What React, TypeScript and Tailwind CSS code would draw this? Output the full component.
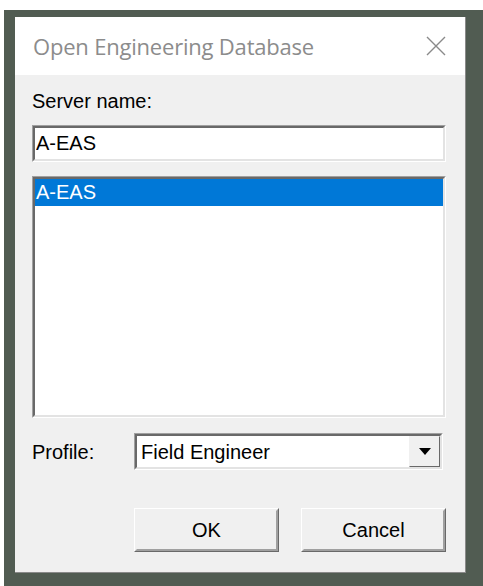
import React, { useState } from "react";

const ui = { fontFamily: '"Liberation Sans", Arial, sans-serif' };
const title = { fontFamily: '"Open Sans", "Noto Sans", sans-serif' };

// Classic sunken 3D frame used by edits, lists and combos
const Sunken = ({ className = "", children }: { className?: string; children: React.ReactNode }) => (
  <div className={`border border-t-[#a0a0a0] border-l-[#a0a0a0] border-b-white border-r-white ${className}`}>
    <div className="h-full border-2 border-t-[#696969] border-l-[#696969] border-b-[#e3e3e3] border-r-[#e3e3e3] bg-white">
      {children}
    </div>
  </div>
);

const Button = ({ label }: { label: string }) => (
  <button className="w-[145px] h-[44px] border border-t-white border-l-white border-b-[#696969] border-r-[#696969] bg-[#f0f0f0]">
    <span className="flex h-full items-center justify-center border-2 border-t-[#f0f0f0] border-l-[#f0f0f0] border-b-[#a0a0a0] border-r-[#a0a0a0] text-[20px] text-black">
      {label}
    </span>
  </button>
);

export default function App() {
  const [server, setServer] = useState("A-EAS");
  const servers = ["A-EAS"];

  return (
    <div className="w-[483px] h-[586px] bg-white pl-[4px] pt-[10px] overflow-hidden" style={ui}>
      <div className="h-full bg-[#515c52] pl-[11px] pt-[7px] pr-[17px] pb-[13px]">
        <div className="h-full flex flex-col bg-[#f0f0f0] border-r border-b border-[#8a8a8a]">
          {/* caption */}
          <div className="h-[58px] shrink-0 bg-white flex items-center justify-between pl-[18px] pr-[18px]">
            <span className="text-[22px] text-[#8c8c8c] tracking-[-0.2px]" style={title}>
              Open Engineering Database
            </span>
            <svg width="20" height="20" viewBox="0 0 20 20" className="mr-[1px]">
              <path d="M1 1 L19 19 M19 1 L1 19" stroke="#8a8a8a" strokeWidth="1.4" fill="none" />
            </svg>
          </div>

          {/* body */}
          <div className="flex-1 flex flex-col pl-[17px] pr-[19px] pt-[14px]">
            <div className="text-[20px] leading-[24px] text-black">Server name:</div>

            <Sunken className="mt-[12px] h-[37px]">
              <input
                value={server}
                onChange={(e) => setServer(e.target.value)}
                className="w-full h-full px-[1px] text-[20px] leading-[24px] text-black outline-none bg-white"
                style={ui}
              />
            </Sunken>

            <Sunken className="mt-[14px] h-[242px]">
              {servers.map((s) => (
                <div key={s} className="h-[27px] bg-[#0078d7] text-white text-[20px] leading-[27px] pl-[1px]">
                  {s}
                </div>
              ))}
            </Sunken>

            <div className="mt-[15px] flex items-center">
              <span className="w-[102px] text-[20px] text-black">Profile:</span>
              <Sunken className="w-[309px] h-[37px]">
                <div className="h-full flex items-center">
                  <span className="flex-1 pl-[4px] text-[20px] leading-[24px] text-black">Field Engineer</span>
                  <div className="w-[31px] h-full border border-t-[#f0f0f0] border-l-[#f0f0f0] border-b-[#696969] border-r-[#696969] bg-[#f0f0f0] flex items-center justify-center">
                    <svg width="12" height="7" viewBox="0 0 12 7">
                      <path d="M0 0 H12 L6 7 Z" fill="#000" />
                    </svg>
                  </div>
                </div>
              </Sunken>
            </div>

            <div className="mt-[38px] flex justify-end gap-[22px] pr-[0px]">
              <Button label="OK" />
              <Button label="Cancel" />
            </div>
          </div>
        </div>
      </div>
    </div>
  );
}
